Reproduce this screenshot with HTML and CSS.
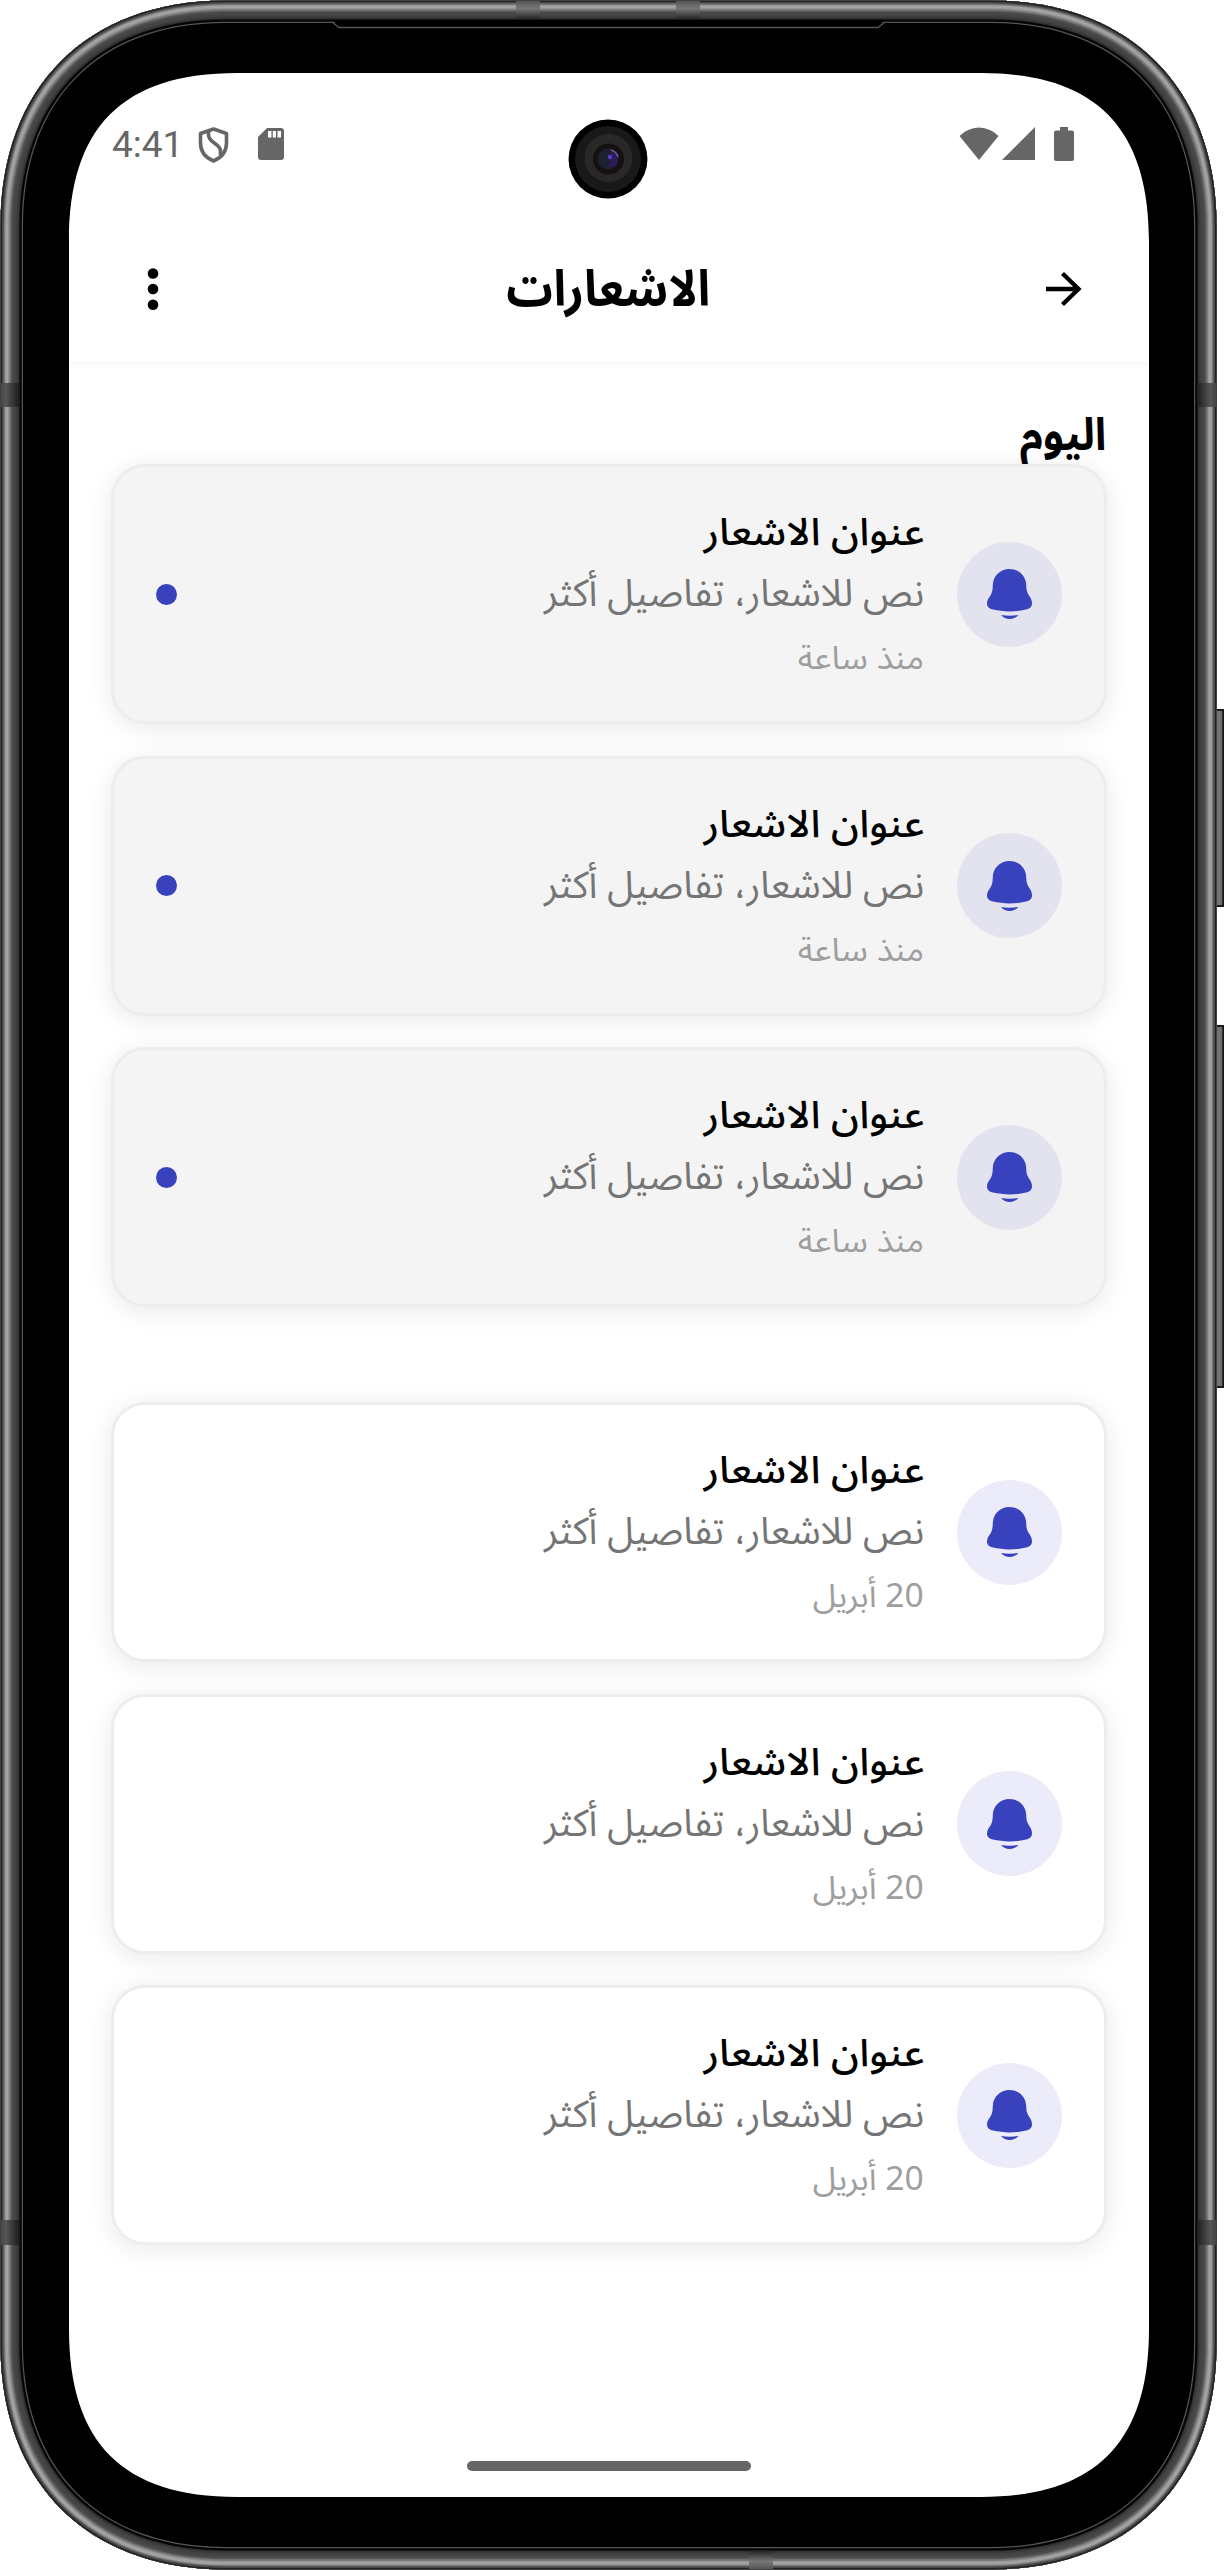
FILE: index.html
```html
<!DOCTYPE html>
<html lang="ar" dir="rtl">
<head>
<meta charset="utf-8">
<title>الاشعارات</title>
<link rel="stylesheet" href="styles.css">
</head>
<body>
<svg class="sprite" width="0" height="0" aria-hidden="true">
  <symbol id="bell" viewBox="0 0 45 50">
    <path fill="currentColor" d="M22.500 0C32 0 39 7 39.200 16C39.300 20 39.500 22.500 42 26.500C44 29.500 45 31.500 45 34.500C45 38 42.500 39.800 39 40.600C29 43 16 43 6 40.600C2.500 39.800 0 38 0 34.500C0 31.500 1.500 29 3.500 26.500C5.500 23 5.700 20 5.800 16C6 7 13 0 22.500 0ZM14 46Q22.500 47.500 31.500 46Q28 50 22.700 50Q17.500 50 14 46Z"/>
  </symbol>
</svg>
<div class="phone">
  <main class="screen">
    <div class="status" dir="ltr">
      <div class="status-side">
        <span class="clock">4:41</span>
        <svg class="shield" width="31" height="36" viewBox="0 0 31 36" fill="none" stroke="#666" stroke-width="3.600" stroke-linejoin="round"><path d="M15.500 2L28.500 6.500V16C28.500 24 24 30.500 15.500 34C7 30.500 2.500 24 2.500 16V6.500Z"/><path d="M10.500 4.500V8C10.500 16 22.500 16.500 22.500 24V28"/></svg>
        <svg class="card-icon" width="26" height="32" viewBox="0 0 26 32"><path fill="#666" fill-rule="evenodd" d="M9 0H23Q26 0 26 3V29Q26 32 23 32H3Q0 32 0 29V9ZM10 3V9.500H13.500V3ZM14.800 3V9.500H18V3ZM19.500 3V9.500H23V3Z"/></svg>
      </div>
      <div class="status-side">
        <svg width="40" height="33" viewBox="0 0 40 33"><path fill="#666" d="M20 33L0.500 9Q8 1 20 0.500Q32 1 39.500 9Z"/></svg>
        <svg class="signal" width="33" height="33" viewBox="0 0 33 33"><path fill="#666" d="M33 0V33H0Z"/></svg>
        <svg class="battery" width="20" height="34" viewBox="0 0 20 34"><path fill="#666" d="M6 0H14V3.500H18Q20 3.500 20 5.500V32Q20 34 18 34H2Q0 34 0 32V5.500Q0 3.500 2 3.500H6Z"/></svg>
      </div>
    </div>
    <header class="appbar">
      <svg class="back" width="36" height="36" viewBox="0 0 36 36" fill="none" stroke="#000" stroke-width="4.300"><path d="M0 18H32M16.500 2.500L32.500 18L16.500 33.500"/></svg>
      <h1 class="title">الاشعارات</h1>
      <svg class="menu" width="12" height="44" viewBox="0 0 12 44"><circle cx="6" cy="6.500" r="5.300"/><circle cx="6" cy="22" r="5.300"/><circle cx="6" cy="37.800" r="5.300"/></svg>
    </header>
    <h2 class="day"><span>اليوم</span></h2>
    <section class="group">
      <article class="card unread"><div class="badge"><svg class="bell"><use href="#bell"/></svg></div><div class="text"><h3>عنوان الاشعار</h3><p class="body">نص للاشعار، تفاصيل أكثر</p><p class="time">منذ ساعة</p></div><i class="dot"></i></article>
      <article class="card unread"><div class="badge"><svg class="bell"><use href="#bell"/></svg></div><div class="text"><h3>عنوان الاشعار</h3><p class="body">نص للاشعار، تفاصيل أكثر</p><p class="time">منذ ساعة</p></div><i class="dot"></i></article>
      <article class="card unread"><div class="badge"><svg class="bell"><use href="#bell"/></svg></div><div class="text"><h3>عنوان الاشعار</h3><p class="body">نص للاشعار، تفاصيل أكثر</p><p class="time">منذ ساعة</p></div><i class="dot"></i></article>
    </section>
    <section class="group">
      <article class="card"><div class="badge"><svg class="bell"><use href="#bell"/></svg></div><div class="text"><h3>عنوان الاشعار</h3><p class="body">نص للاشعار، تفاصيل أكثر</p><p class="time date">20 أبريل</p></div></article>
      <article class="card"><div class="badge"><svg class="bell"><use href="#bell"/></svg></div><div class="text"><h3>عنوان الاشعار</h3><p class="body">نص للاشعار، تفاصيل أكثر</p><p class="time date">20 أبريل</p></div></article>
      <article class="card"><div class="badge"><svg class="bell"><use href="#bell"/></svg></div><div class="text"><h3>عنوان الاشعار</h3><p class="body">نص للاشعار، تفاصيل أكثر</p><p class="time date">20 أبريل</p></div></article>
    </section>
    <div class="home"></div>
  </main>
  <!-- Device shell: metal rim built from strokes of decreasing width, clipped to the outline -->
  <svg class="shell" width="1224" height="2570" viewBox="0 0 1224 2570" fill="none">
    <defs>
      <path id="outline" d="M226 0.500H990C1129 0.500 1216.500 87 1216.500 226V2344C1216.500 2483 1129 2569.500 990 2569.500H226C87 2569.500 0.500 2483 0.500 2344V226C0.500 87 87 0.500 226 0.500Z"/>
      <clipPath id="rim"><use href="#outline"/></clipPath>
      <linearGradient id="band" x1="0" x2="19" gradientUnits="userSpaceOnUse"><stop offset="0" stop-color="#444"/><stop offset=".3" stop-color="#555"/><stop offset="1" stop-color="#1c1c1c"/></linearGradient>
      <linearGradient id="band-r" x1="1216" x2="1197" gradientUnits="userSpaceOnUse"><stop offset="0" stop-color="#444"/><stop offset=".3" stop-color="#555"/><stop offset="1" stop-color="#1c1c1c"/></linearGradient>
      <linearGradient id="band-t" x1="0" x2="0" y1="0" y2="1"><stop offset="0" stop-color="#555"/><stop offset=".4" stop-color="#777"/><stop offset="1" stop-color="#1c1c1c"/></linearGradient>
      <linearGradient id="band-b" x1="0" x2="0" y1="1" y2="0"><stop offset="0" stop-color="#555"/><stop offset=".4" stop-color="#777"/><stop offset="1" stop-color="#1c1c1c"/></linearGradient>
      <linearGradient id="key"><stop offset="0" stop-color="#444"/><stop offset=".3" stop-color="#777"/><stop offset=".65" stop-color="#6a6a6a"/><stop offset=".8" stop-color="#111"/><stop offset="1" stop-color="#222"/></linearGradient>
    </defs>
    <g stroke="#1a1a1a" stroke-width="2" fill="url(#key)">
      <rect x="1215" y="710" width="10" height="196"/>
      <rect x="1215" y="1026" width="10" height="361"/>
    </g>
    <path fill="#000" fill-rule="evenodd" d="M226 0.500H990C1129 0.500 1216.500 87 1216.500 226V2344C1216.500 2483 1129 2569.500 990 2569.500H226C87 2569.500 0.500 2483 0.500 2344V226C0.500 87 87 0.500 226 0.500ZM237 73C123 73 69 127 69 241V2329C69 2443 123 2497 237 2497H981C1095 2497 1149 2443 1149 2329V241C1149 127 1095 73 981 73Z"/>
    <g clip-path="url(#rim)">
      <use href="#outline" stroke="#555" stroke-width="45"/>
      <use href="#outline" stroke="#050505" stroke-width="42.500"/>
      <use href="#outline" stroke="#2a2a2a" stroke-width="38"/>
      <use href="#outline" stroke="#3a3a3a" stroke-width="36"/>
      <use href="#outline" stroke="#444" stroke-width="32"/>
      <use href="#outline" stroke="#4c4c4c" stroke-width="26"/>
      <use href="#outline" stroke="#626262" stroke-width="22"/>
      <use href="#outline" stroke="#7a7a7a" stroke-width="20"/>
      <use href="#outline" stroke="#959595" stroke-width="17"/>
      <use href="#outline" stroke="#a2a2a2" stroke-width="15"/>
      <use href="#outline" stroke="#8a8a8a" stroke-width="10"/>
      <use href="#outline" stroke="#686868" stroke-width="8"/>
      <use href="#outline" stroke="#484848" stroke-width="6"/>
      <use href="#outline" stroke="#222" stroke-width="3"/>
      <path fill="url(#band)" d="M1 383H20V407H1ZM1 2220H20V2245H1Z"/>
      <path fill="url(#band-r)" d="M1197 383H1216V407H1197ZM1197 2220H1216V2245H1197Z"/>
      <path fill="url(#band-t)" d="M516 1H540V20H516ZM676 1H700V20H676Z"/>
      <path fill="url(#band-b)" d="M749 2550H773V2569H749Z"/>
    </g>
    <path fill="#000" d="M332 20H885L877 27H340Z"/>
    <path stroke="#555" stroke-width="1.300" d="M332 22L339 27.500H878L885 22"/>
    <g>
      <circle cx="608" cy="159" r="39.500" fill="#000"/>
      <circle cx="608" cy="159" r="33" fill="#191919"/>
      <circle cx="608.500" cy="158" r="24" fill="#2a2827"/>
      <circle cx="608.500" cy="159" r="15.500" fill="#151112"/>
      <circle cx="608" cy="159" r="10.500" fill="#1d2231"/>
      <path d="M611 150A10 10 0 0 1 616 165Q611 168 607 167Q614 160 611 150Z" fill="#2c1c5c"/>
      <path d="M611 150Q616 151 618 157" stroke="#72589a" stroke-width="1.500"/>
      <circle cx="610" cy="157" r="2.200" fill="#6437c8"/>
    </g>
  </svg>
</div>
</body>
</html>
```
FILE: styles.css
```css
* { box-sizing: border-box; }
body { margin: 0; background: #fff; font-family: "Noto Sans Arabic", "Noto Sans", sans-serif; }
h1, h2, h3, p { margin: 0; white-space: nowrap; }
.sprite { display: block; position: absolute; }
.phone { position: relative; width: 1224px; height: 2570px; padding: 73px 75px 73px 69px; overflow: hidden; }
.shell { position: absolute; top: 0; left: 0; }
.screen { width: 1080px; height: 2424px; display: flex; flex-direction: column; background: #fff; overflow: hidden; }
.status { height: 142px; padding: 54px 75px 0 43px; display: flex; justify-content: space-between; align-items: flex-start; }
.status-side { display: flex; align-items: flex-start; }
.clock { font: 37px/36px Roboto, sans-serif; color: #666; width: 86px; }
.card-icon { margin: 1px 0 0 29px; }
.signal { margin-left: 3px; }
.battery { margin-left: 19px; }
.appbar { height: 147px; flex: none; padding: 0 67px 0 78px; display: flex; justify-content: space-between; align-items: center; box-shadow: 0 2px 4px rgba(0, 0, 0, .04); }
.title { font-size: 50px; line-height: 80px; font-weight: 700; padding-top: 3px; transform: scaleX(.925); }
.menu { margin-right: 12px; }
.day { height: 102px; flex: none; padding: 44px 43px 0 0; font-size: 45px; line-height: 60px; font-weight: 700; }
.day span { display: inline-block; transform: scaleX(.935); transform-origin: right center; }
.group { padding: 0 42px 0 42px; display: flex; flex-direction: column; gap: 31.5px; }
.group + .group { margin-top: 95px; }
.card { position: relative; height: 260px; flex: none; display: flex; align-items: center; padding: 0 42px; background: #fff; border: 3px solid #ededed; border-radius: 34px; box-shadow: 0 4px 26px rgba(0, 0, 0, .09); }
.unread { background: #f4f4f4; }
.badge { width: 105px; height: 105px; flex: none; border-radius: 50%; display: flex; align-items: center; justify-content: center; background: #ecebf9; color: #3842bd; }
.unread .badge { background: #e3e3f0; }
.bell { width: 45px; height: 50px; }
.text { flex: 1; display: flex; flex-direction: column; align-items: flex-start; margin-right: 33px; }
.text > * { transform-origin: right center; }
h3 { font-size: 38px; line-height: 62px; font-weight: 500; transform: translateY(2px) scaleX(1.064); }
.body { font-size: 38px; line-height: 62px; color: #757575; transform: translateY(.5px) scaleX(.995); }
.time { font-size: 32px; line-height: 64px; color: #9e9e9e; transform: translateY(2.5px) scaleX(1.06); }
.date { transform: translateY(2.5px) scaleX(1.05); }
.dot { width: 21px; height: 21px; border-radius: 50%; background: #3842bd; }
.home { width: 284px; height: 10px; margin: auto auto 26px; border-radius: 5px; background: #666; }
```
